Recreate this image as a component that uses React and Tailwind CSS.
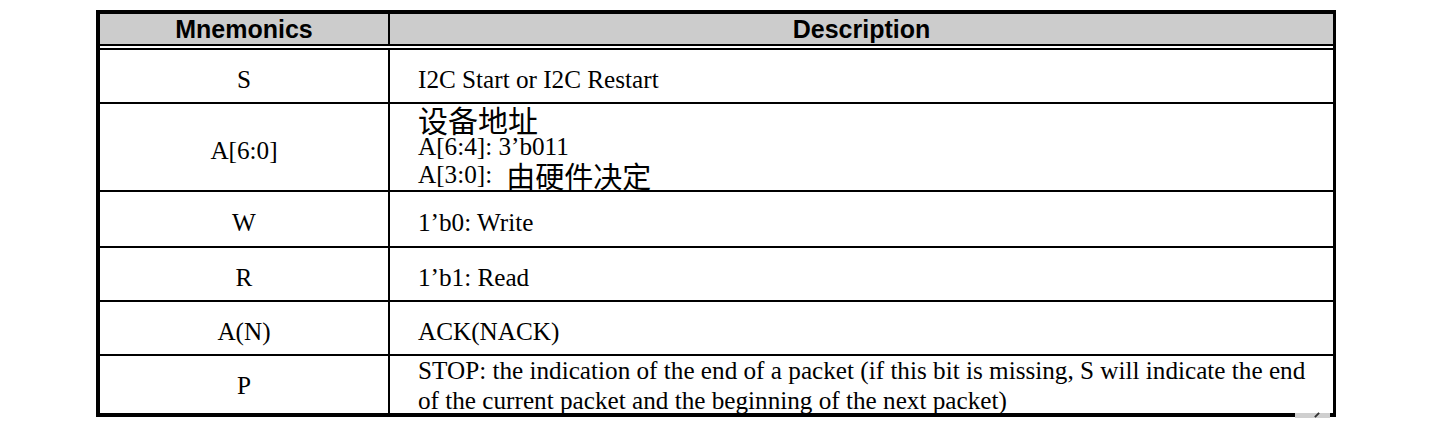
const rows = [
  { m: 'S', h: 'h-[54px]', d: ['I2C Start or I2C Restart'] },
  { m: 'A[6:0]', h: 'h-[88px]', special: true },
  { m: 'W', h: 'h-[56px]', d: ['1’b0: Write'] },
  { m: 'R', h: 'h-[54px]', d: ['1’b1: Read'] },
  { m: 'A(N)', h: 'h-[54px]', d: ['ACK(NACK)'] },
  {
    m: 'P',
    h: 'h-[57px]',
    last: true,
    d: [
      'STOP: the indication of the end of a packet (if this bit is missing, S will indicate the end',
      'of the current packet and the beginning of the next packet)',
    ],
  },
];

const serif = "font-['Liberation_Serif','Times_New_Roman',serif]";
const cjk = "font-['Noto_Sans_CJK_SC',sans-serif]";

export default function App() {
  return (
    <div className="min-h-screen bg-white pt-[10px]">
      <div className="relative ml-[96px] w-[1240px] border-t-4 border-l-4 border-r-[3px] border-b-4 border-black text-black">
        {/* Header */}
        <div className="grid grid-cols-[290px_1fr] h-[30px] bg-[#cccccc] font-['Liberation_Sans',Arial,sans-serif] font-bold text-[25px]">
          <div className="flex items-center justify-center border-r-2 border-black leading-none">Mnemonics</div>
          <div className="flex items-center justify-center leading-none">Description</div>
        </div>
        <div className="h-[6px] border-t-2 border-b-2 border-black bg-white" />

        {/* Body */}
        {rows.map((r) => (
          <div
            key={r.m}
            className={`grid grid-cols-[290px_1fr] ${r.h} ${r.last ? '' : 'border-b-2 border-black'} ${serif} text-[25.2px]`}
          >
            <div className={`flex items-center justify-center border-r-2 border-black ${r.last ? '' : 'pt-2'}`}>{r.m}</div>
            {r.special ? (
              <div className="pl-[28px] leading-none">
                <div className={`${cjk} h-[30px] flex items-center text-[30px]`}>设备地址</div>
                <div className="h-[26px] flex items-center">A[6:4]: 3’b011</div>
                <div className="h-[30px] flex items-center whitespace-nowrap">
                  A[3:0]:<span className={`${cjk} ml-[14px] text-[29px]`}>由硬件决定</span>
                </div>
              </div>
            ) : (
              <div className={`flex flex-col justify-center pl-[28px] ${r.last ? 'leading-[30px]' : 'pt-2'}`}>
                {r.d.map((t) => (
                  <div key={t} className="whitespace-nowrap">{t}</div>
                ))}
              </div>
            )}
          </div>
        ))}

        {/* small floating tab at the bottom-right corner */}
        <div className="absolute -bottom-[5px] right-[3px] h-[5px] w-[35px] bg-[#cfcfcf]">
          <div className="ml-[19px] mt-[1px] h-[2px] w-[6px] -rotate-45 bg-[#333]" />
        </div>
      </div>
    </div>
  );
}
